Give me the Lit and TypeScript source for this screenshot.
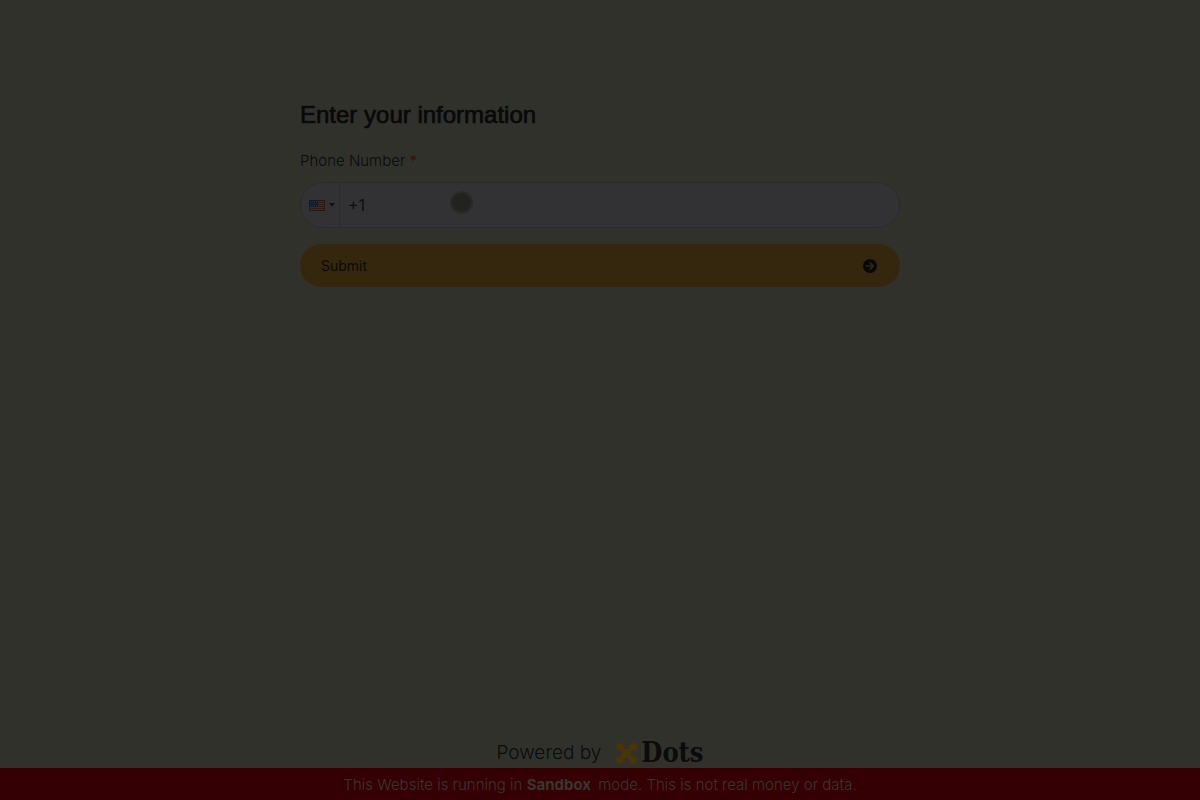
import { LitElement, html, css, svg } from "lit";
import { customElement, state } from "lit/decorators.js";

const STRIPES = [0, 2, 4, 6, 8, 10];
const STARS = [
  [1, 1], [3, 1], [5, 1], [7, 1],
  [2, 3], [4, 3], [6, 3],
  [1, 5], [3, 5], [5, 5], [7, 5],
];

@customElement("app-root")
export class AppRoot extends LitElement {
  static styles = css`
    :host {
      display: flex;
      flex-direction: column;
      min-height: 100vh;
      background: #31312b;
      color: #0b0b0b;
      font-family: Inter, "Liberation Sans", sans-serif;
    }
    * {
      box-sizing: border-box;
    }
    main {
      flex: 1;
      width: 100%;
      max-width: 632px;
      margin: 0 auto;
      padding: 99px 16px 0;
    }
    h1 {
      margin: 0 0 20px;
      font-family: "Liberation Sans", Arial, sans-serif;
      font-size: 24px;
      line-height: 32px;
      font-weight: 400;
      -webkit-text-stroke: 0.7px currentColor;
      color: #09090b;
    }
    form {
      display: flex;
      flex-direction: column;
    }
    .label {
      margin-bottom: 11px;
      font-size: 15px;
      line-height: 20px;
      font-weight: 300;
      color: #09090b;
    }
    .required {
      color: #420a0c;
      font-weight: 400;
    }
    .field {
      position: relative;
      display: flex;
      height: 46px;
      margin-bottom: 16px;
      border: 1px solid #2b2b2d;
      border-radius: 23px;
      background: #323235;
      overflow: hidden;
    }
    .country {
      display: flex;
      align-items: center;
      gap: 4px;
      width: 39px;
      padding: 0 0 0 8px;
      border: 0;
      border-right: 1px solid #2b2b2d;
      background: none;
    }
    .flag {
      display: block;
      width: 16px;
      height: 11px;
    }
    .caret {
      display: block;
      width: 6px;
      height: 4px;
    }
    .phone {
      flex: 1;
      min-width: 0;
      padding: 0 8px;
      border: 0;
      outline: 0;
      background: none;
      color: #0d0e10;
      font: 400 16px/24px Inter, sans-serif;
    }
    .touch {
      position: absolute;
      left: 149px;
      top: 8px;
      width: 23px;
      height: 23px;
      border: 2px solid #2a2a2a;
      border-radius: 50%;
      background: #22221f;
      pointer-events: none;
    }
    .submit {
      display: flex;
      align-items: center;
      justify-content: space-between;
      height: 43px;
      padding: 0 23px 0 21px;
      border: 0;
      border-radius: 22px;
      background: #35270d;
      color: #0b0b08;
      font: 400 14px/20px Inter, sans-serif;
    }
    .arrow {
      display: block;
      width: 14px;
      height: 14px;
    }
    .powered {
      display: flex;
      align-items: center;
      justify-content: center;
      gap: 15px;
      padding-top: 2px;
      font-size: 19px;
      line-height: 30px;
      font-weight: 300;
    }
    .brand {
      display: flex;
      align-items: center;
      gap: 4px;
      color: #0b0b0b;
      text-decoration: none;
      font: 700 27px/30px "DejaVu Serif Condensed", "DejaVu Serif", serif;
    }
    .mark {
      display: block;
      width: 21px;
      height: 21px;
    }
    .sandbox {
      padding: 2px 16px 0;
      background: #350003;
      color: #3a3532;
      font-size: 15px;
      line-height: 30px;
      font-weight: 300;
      text-align: center;
    }
    .mode {
      margin-right: 3px;
      font-weight: 700;
    }
  `;

  @state() private phone = "+1";

  private onInput(e: Event) {
    this.phone = (e.target as HTMLInputElement).value;
  }

  private onSubmit(e: Event) {
    e.preventDefault();
  }

  render() {
    return html`
      <main>
        <h1>Enter your information</h1>
        <form @submit=${this.onSubmit}>
          <label class="label" for="phone">Phone Number <span class="required">*</span></label>
          <div class="field">
            <button class="country" type="button" aria-label="Country: United States" aria-haspopup="listbox">
              <svg class="flag" viewBox="0 0 16 11" aria-hidden="true">
                <rect width="16" height="11" fill="#332f2c" />
                ${STRIPES.map((y) => svg`<rect y=${y} width="16" height="1" fill="#3c1613" />`)}
                <rect width="9" height="7" fill="#101b32" />
                ${STARS.map(([x, y]) => svg`<rect x=${x} y=${y} width="1" height="1" fill="#29323f" />`)}
                <path d="M.5 .5h15v10H.5z" fill="none" stroke="#171719" stroke-opacity=".55" />
              </svg>
              <svg class="caret" viewBox="0 0 6 4" aria-hidden="true">
                <path d="M0 0h6L3 4z" fill="#121212" />
              </svg>
            </button>
            <input class="phone" id="phone" type="tel" .value=${this.phone} @input=${this.onInput} />
            <span class="touch"></span>
          </div>
          <button class="submit" type="submit">
            Submit
            <svg class="arrow" viewBox="0 0 14 14" aria-hidden="true">
              <circle cx="7" cy="7" r="7" fill="#080807" />
              <path d="M3.3 7h7M7.2 3.9 10.3 7 7.2 10.1" fill="none" stroke="#35270d" stroke-width="1.5" stroke-linecap="round" stroke-linejoin="round" />
            </svg>
          </button>
        </form>
      </main>
      <footer>
        <div class="powered">
          <span>Powered by</span>
          <a class="brand" href="#">
            <svg class="mark" viewBox="0 0 20 20" aria-hidden="true">
              <g fill="#4a3508">
                <circle cx="3.6" cy="3.6" r="3.6" />
                <circle cx="16.4" cy="3.6" r="3.6" />
                <circle cx="3.6" cy="16.4" r="3.6" />
                <circle cx="16.4" cy="16.4" r="3.6" />
                <path d="M7 3Q7.2 5.8 10 5.8T13 3l4 4Q14.2 7.2 14.2 10t2.8 3l-4 4Q12.800 14.200 10 14.200T7 17l-4-4Q5.800 12.800 5.800 10T3 7z" />
              </g>
            </svg>
            Dots
          </a>
        </div>
        <div class="sandbox" role="status">
          This Website is running in <strong class="mode">Sandbox</strong> mode. This is not real money or data.
        </div>
      </footer>
    `;
  }
}
